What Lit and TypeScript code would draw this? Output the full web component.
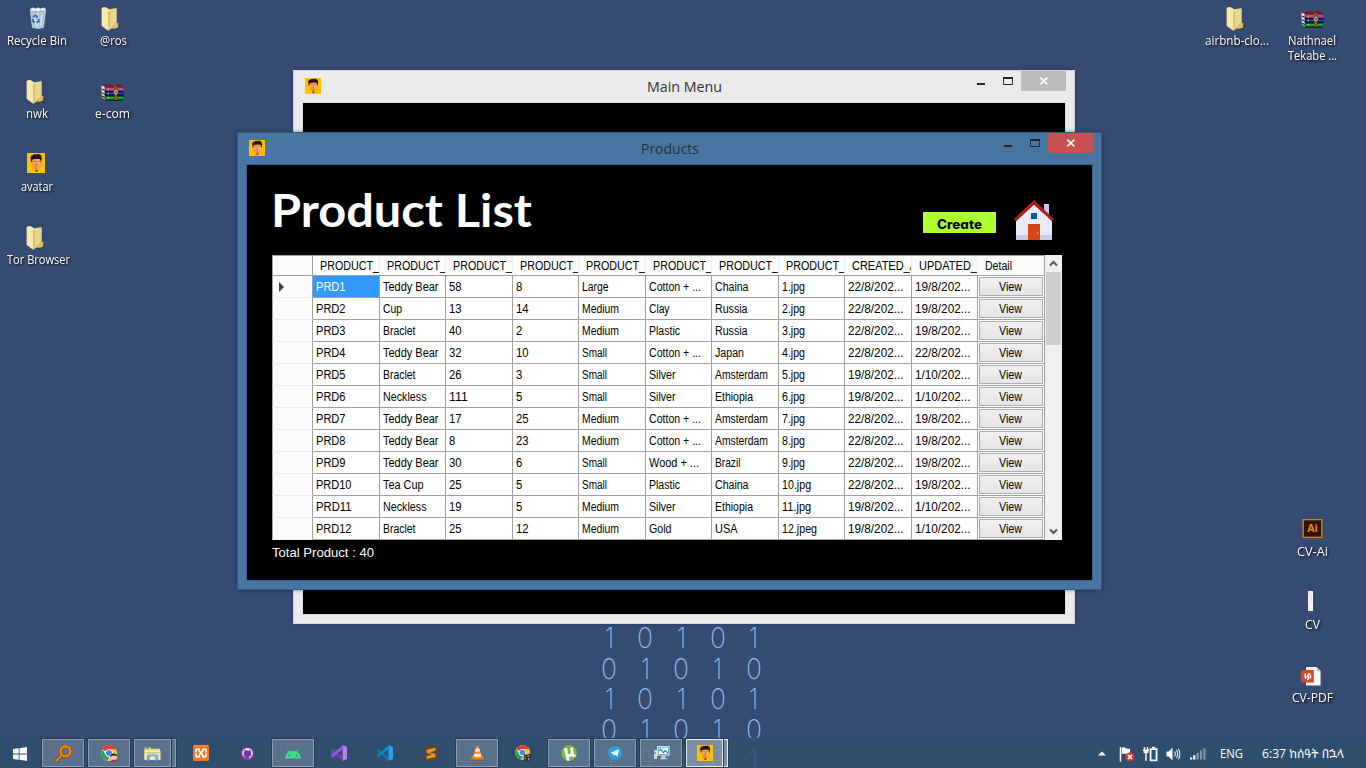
import { LitElement, html, svg, css } from "lit";
import { customElement, property } from "lit/decorators.js";

/* One line of text set to an exact measure. */
const fit = (text: string, width: number, height: number, base: number, cls = "") => html`
  <svg class="fit ${cls}" width=${width} height=${height}>
    <text x="0" y=${base} textLength=${width} lengthAdjust="spacingAndGlyphs">${text}</text>
  </svg>`;

const avatar = svg`
  <rect width="16" height="16" fill="#ffc000"/>
  <path d="M4.6 5 4.4 9 5.4 12.2 7.3 14.6H9.4L11.4 12.4 12.4 8.8 12.2 5 8.5 3.4z" fill="#ee9a45"/>
  <path d="M8.6 4.5 12.2 5 12.4 8.8 11.4 12.4 9.4 14.6 8.6 14.6z" fill="#f3a95c"/>
  <path d="M3.7 8.2 3.3 4.3 2.6 3.7 3.8 3.1 3.7 1.8 5.2 1.7 6.4.7 8.4 1.1 10.5.6 11.6 1.6 12.9 2 12.7 3.4 13.4 4.3 12.8 5.5 12.6 8.4 12 6.2 11.4 4.8 8.4 4.5 5.3 4.9 4.4 6.2z" fill="#26100f"/>
  <path d="M5.4 6.9H7.6M9.4 6.9H11.5" stroke="#8d4a22" stroke-width=".6"/>
  <path d="M5.8 7.9H7.3M9.8 7.9H11.2" stroke="#fff3d6" stroke-width=".7"/>
  <path d="M8.3 8V10.1H9.1" stroke="#b8662b" stroke-width=".6" fill="none"/>
  <path d="M7.1 12.2H9.8L9.1 11.7H7.8z" fill="#7d3a20"/>
  <path d="M7.3 13.6H9.5L9 15H7.9z" fill="#5b2419"/>`;

const chrome = svg`
  <circle cx="7.5" cy="7.5" r="7.3" fill="#fff"/>
  <path d="M7.5 7.5 1.2 3.8A7.4 7.4 0 0 1 14 4z" fill="#e33b2e"/>
  <path d="M7.5 .2A7.3 7.3 0 0 1 13.9 4H7.5A3.5 3.5 0 0 0 4.4 5.9L1.2 3.8A7.3 7.3 0 0 1 7.5.2z" fill="#e33b2e"/>
  <path d="M1.2 3.8 4.5 9.3A3.5 3.5 0 0 0 8 11L6.3 14.7A7.3 7.3 0 0 1 1.2 3.8z" fill="#2ba24c"/>
  <path d="M7.5 4H13.9A7.3 7.3 0 0 1 6.4 14.7L10.5 9.3A3.5 3.5 0 0 0 9.6 4.7z" fill="#fbc116"/>
  <circle cx="7.5" cy="7.5" r="3.5" fill="#fff"/><circle cx="7.5" cy="7.5" r="2.8" fill="#4285f4"/>`;

const icons: Record<string, unknown> = {
  avatar: svg`<svg viewBox="0 0 16 16" preserveAspectRatio="none">${avatar}</svg>`,
  bin: svg`<svg viewBox="0 0 18 23">
    <path d="M1 2 3.2 21.3Q9 23.6 14.7 21.3L17 2z" fill="#a9bdcd" stroke="#dbe7ef" stroke-width=".8"/>
    <path d="M5 7 7 20M9 6V21M13 7 12 20" stroke="#dfe9ef" stroke-width="1.4" fill="none"/>
    <path d="M1 2 4 .6 6.6 1.8 9 .4 12 1.8 14.7.5 17 2 15.7 4.4 12 3.6 9.5 5 6 4 2.5 4.6z" fill="#eef3f6" stroke="#8295a8" stroke-width=".5"/>
    <path d="M4 11 5.4 8.8 7.6 9.4 8.2 11.5M9.3 12.3 10 15 7.6 16.4M5.8 16.2 3.6 15 3.8 12.6" fill="none" stroke="#2868c8" stroke-width="1.8"/>
  </svg>`,
  folder: svg`<svg viewBox="0 0 20 24">
    <path d="M10 18 20 18 16.6 23 8 22z" fill="#1f2d48" opacity=".45"/>
    <path d="M8.4 2.3 15.4 1.5V15.4L17.2 16V20.6L14.2 21.7 8 21.6z" fill="#d9bd63"/>
    <path d="M9.8 2 15.6 1.3V15L9.8 20.7z" fill="#ead68c"/>
    <path d="M1 1 4.2.3 9.6 3.6V21.8L7.2 23.3 1 18.8z" fill="#fae9a6" stroke="#fdf6ce" stroke-width=".7"/>
    <path d="M6.9 4.5 9.6 3.7V21.8L7.2 23.2z" fill="#d8c077"/>
  </svg>`,
  rar: svg`<svg viewBox="0 0 24 19" preserveAspectRatio="none">
    <path d="M1 3 6 1H20L23.5 4.5V6H2z" fill="#6b1d35"/>
    <path d="M.4 3 4 4V18L1 15z" fill="#e9e4dc"/>
    <path d="M1.3 6.3 4 8M1.3 10.3 4 12M1.3 13.8 4 15.8" stroke="#222" stroke-width="1.2"/>
    <rect x="4" y="4.5" width="19.5" height="4.3" fill="#8a2f60"/><path d="M5 6.3H23" stroke="#d85fb0" stroke-width="1.3"/>
    <rect x="4" y="9" width="19.5" height="4.4" fill="#0b1266"/><path d="M5 11H23" stroke="#2a50e0" stroke-width="1.3"/>
    <rect x="4" y="13.6" width="19.5" height="4.5" fill="#0c6a1c"/><path d="M5 15.5H23" stroke="#20c838" stroke-width="1.3"/>
    <path d="M4 9H23.5M4 13.5H23.5M4 18.3H23" stroke="#160c23" stroke-width=".9"/>
    <path d="M11.5 1 13.8 4V18H17V4L14.5 1z" fill="#6e4513"/><path d="M15.4 4V18" stroke="#d6a44b" stroke-dasharray="1 1"/>
    <circle cx="15.4" cy="9.7" r="1.8" fill="none" stroke="#d8d0ba" stroke-width=".9"/>
    <path d="M7.5 6V7.8M7.5 10V12M7.5 14.8V16.6" stroke="#e0b84c" stroke-width="1.2"/>
  </svg>`,
  ai: svg`<svg viewBox="0 0 21 20"><rect x=".7" y=".7" width="19.6" height="18.6" fill="#2b1703" stroke="#e07c12" stroke-width="1.4"/><text x="4.9" y="13.8" class="aiText" textLength="11" lengthAdjust="spacingAndGlyphs">Ai</text></svg>`,
  strip: svg`<svg viewBox="0 0 5 20"><rect width="5" height="20" fill="#f5f4f3"/><path d="M2 1V7M3.4 4V12M1.8 10V18" stroke="#dedad8" stroke-width=".7"/></svg>`,
  pdf: svg`<svg viewBox="0 0 20 19">
    <path d="M5 0H15.5L19.6 4V18.6H5z" fill="#f7f7f7"/><path d="M15.5 0V4.2H19.6z" fill="#c9ccd0"/>
    <rect y="3" width="12.8" height="12.6" fill="#d2492c"/>
    <path d="M4.2 6.4V11M4 11.2 6 10.2M6.4 13Q8.6 10.8 6.6 8.6L8.6 6.2M9.4 7.4V11.4" stroke="#fff" stroke-width="1.5" fill="none"/>
  </svg>`,
  win: svg`<svg viewBox="0 0 14 14"><path d="M0 2.1 5.7 1.3V6.6H0zM6.5 1.2 14 .1V6.6H6.5zM0 7.4H5.7V12.7L0 11.9zM6.5 7.4H14V13.9L6.5 12.8z" fill="#fff"/></svg>`,
  search: svg`<svg viewBox="0 0 16 16"><path d="M6.6 9.4 1.5 14.6" stroke="#6f3a12" stroke-width="3.6" stroke-linecap="round"/><circle cx="9.9" cy="5.9" r="4.6" fill="none" stroke="#8a4208" stroke-width="3"/><circle cx="9.9" cy="5.9" r="4.6" fill="none" stroke="#ff8c0a" stroke-width="2"/><path d="M6.6 9.4 1.5 14.6" stroke="#f07d0a" stroke-width="2.2" stroke-linecap="round"/></svg>`,
  chromeA: svg`<svg viewBox="0 0 16 16">${chrome}<circle cx="11.7" cy="11" r="3.5" fill="#e6c8ae"/><path d="M8.6 9.9Q11 6.7 14.8 9.1L15 10.5Q11 9 9 11.2z" fill="#3a2018"/><path d="M8.3 16 10.6 13.8 13.5 13.8 16 15.7z" fill="#bb3038"/></svg>`,
  chromeB: svg`<svg viewBox="0 0 16 16">${chrome}<path d="M8.6 10.2 10 9.2 12 9.8 14.6 9 15.6 10.8 15.2 15.6H9z" fill="#27211f"/><path d="M9.8 11.6 10.8 11M12.4 11.4 14.2 10.9M9.8 14 11 13M13 14.8 14.6 13" stroke="#c9a78c" stroke-width="1.1"/></svg>`,
  explorer: svg`<svg viewBox="0 0 17 15">
    <path d="M.5 1.5H6L7.4 2.8H16V13.6H.5z" fill="#efd98a"/><path d="M1.5 1.6H5V3H1.5z" fill="#3fa83d"/>
    <path d="M.5 4.5H16.5V13.8H.5z" fill="#f8e9ae"/><path d="M.5 6.6H16.5" stroke="#e0c56d"/>
    <path d="M2.6 14.6 3.2 8.3Q8.5 6.1 14 8.3L14.6 14.6H11.4V11Q8.5 9.6 5.8 11V14.6z" fill="#62b4e4"/><path d="M4 8.8Q8.5 7.2 13.3 8.8" stroke="#b5e0f6" fill="none"/>
  </svg>`,
  xampp: svg`<svg viewBox="0 0 16 16"><rect width="16" height="16" rx="1.6" fill="#f57421"/><path d="M1 .8H15" stroke="#ff9c55"/>
    <path d="M3 7.4V5.6Q3 4 4.7 4Q6.4 4 6.4 5.6V6.4L9.6 9.6V10.4Q9.6 12 11.3 12Q13 12 13 10.4V8.6M13 7.4V5.6Q13 4 11.3 4Q9.6 4 9.6 5.6V6.4L6.4 9.6V10.4Q6.4 12 4.7 12Q3 12 3 10.4V8.6" fill="none" stroke="#fff" stroke-width="1.7"/></svg>`,
  github: svg`<svg viewBox="0 0 16 16"><circle cx="8" cy="8" r="7.6" fill="#7a3ba5"/><circle cx="8" cy="7.7" r="5.6" fill="#f5effa"/>
    <path d="M6.5 13.6V11.6Q3.9 11 3.9 7.9Q3.9 6.9 4.6 6L4.6 4.1 6.5 4.9Q8 4.5 9.5 4.9L11.4 4.1V6Q12.1 6.9 12.1 7.9Q12.1 11 9.5 11.6V13.6z" fill="#7135a0"/><path d="M3.5 10.2 5 12.2 6.6 12.3" stroke="#7135a0" fill="none"/></svg>`,
  android: svg`<svg viewBox="0 0 16 10"><path d="M0 10A8 7.7 0 0 1 16 10z" fill="#3ddc84"/><path d="M4.3 4 2.6.8M11.7 4 13.4.8" stroke="#3ddc84" stroke-width=".9"/><circle cx="4.4" cy="7" r=".7" fill="#315a66"/><circle cx="11.6" cy="7" r=".7" fill="#315a66"/></svg>`,
  vs: svg`<svg viewBox="0 0 16 16"><path d="M11.6 0 16 2V14L11.6 16z" fill="#b580ef"/><path d="M0 4.2 1.7 3.4 11.6 12V16L2 7.5 1.7 10.5 0 11.8z" fill="#7a3cc2"/><path d="M0 11.8 1.7 12.6 11.6 4V0L1.5 9z" fill="#9557dc"/></svg>`,
  vscode: svg`<svg viewBox="0 0 16 16"><path d="M11.5 0 16 2V14L11.5 16z" fill="#27a2ec"/><path d="M0 5.4 1.5 4.2 11.6 12V16z" fill="#0f76b9"/><path d="M0 10.6 1.5 11.8 11.6 4.2V0z" fill="#1287cb"/></svg>`,
  sublime: svg`<svg viewBox="0 0 16 16"><rect width="16" height="16" rx="1" fill="#4b4a49"/><path d="M12.4 2.8V5.5L6.8 7.2 12.4 8.9V12L3.6 14V11.3L9.2 9.6 3.6 7.7V4.8z" fill="#ff9800"/></svg>`,
  vlc: svg`<svg viewBox="0 0 16 16"><path d="M2.6 11H13.4L15.6 15.5H.4z" fill="#f07d10"/><path d="M7 .3H9L12.6 12.2Q8 14.3 3.4 12.2z" fill="#ff8b17"/><path d="M6.2 3.2H9.8L10.8 6.4H5.2zM4.5 8.8H11.5L12.3 11.4Q8 13 3.7 11.4z" fill="#f1ecea"/><path d="M.4 15.4H15.6" stroke="#ad4b05"/></svg>`,
  ut: svg`<svg viewBox="0 0 16 16"><circle cx="8" cy="8" r="7.9" fill="#78b843"/><path d="M3 3.6 6.2 3.1 6.8 7.6Q7.2 9.7 8.7 9.2Q10.1 8.6 9.7 6.6L9.1 2.7 11.8 2.3 12.8 8.8Q13 10.3 14.4 9.8L15.3 9.9Q14.6 12 12.6 12Q11.4 12 10.8 11Q9.7 12.4 7.7 12.1L8.5 15.8H6.1Q4.5 12 3 3.6z" fill="#fff"/></svg>`,
  telegram: svg`<svg viewBox="0 0 14 14"><circle cx="7" cy="7" r="7" fill="#27a0dc"/><path d="M2.6 6.8 11 3.3 9.7 10.5 6.7 8.6 5.4 10 5.1 7.9z" fill="#fff"/><path d="M5.1 7.9 9.4 4.9 6.2 8.3" stroke="#9ccde8" stroke-width=".6" fill="none"/></svg>`,
  monitor: svg`<svg viewBox="0 0 17 16"><rect x="1" y="5" width="3" height="9" fill="#d7dbd8"/><path d="M1 8H3" stroke="#38a04b"/><rect x="4" y="1" width="12.6" height="9.6" fill="#e8ecee"/><rect x="5.2" y="2.2" width="10.2" height="7.2" fill="#f7fcff" stroke="#2489b9" stroke-width=".6"/><path d="M5.5 6.5 7.6 4.2 10.3 7.6 12.2 5.6 15 8.3" fill="none" stroke="#1a8ac0" stroke-width="1.1"/><path d="M8.5 10.7H12.3V12.5L15 14.2H6.3L8.5 12.5z" fill="#cdd2d4"/></svg>`,
  flag: svg`<svg viewBox="0 0 16 16"><path d="M1.5 1V15.8" stroke="#fff" stroke-width="1.5"/><path d="M2.8 1.8Q5.3.5 7.2 2.2Q9.3 3.4 11 2.6V8.4Q8.8 9.5 6.8 8Q4.8 7 2.8 8z" fill="#fff"/><circle cx="11" cy="11" r="4.6" fill="#dc3227"/><path d="M8.9 8.9 13.1 13.1M13.1 8.9 8.9 13.1" stroke="#fff" stroke-width="1.5"/></svg>`,
  battery: svg`<svg viewBox="0 0 15 16"><path d="M1.5 1V3.6M4.5 1V3.6M0 4.2H6M3 7V14.8" stroke="#fff" stroke-width="1.4" fill="none"/><path d="M.6 4.4H5.4V7.2H.6z" fill="#fff"/><path d="M7.6 3.2H13.6V14.4H7.6z" fill="none" stroke="#fff" stroke-width="1.8"/><path d="M9 1.6H12.2" stroke="#fff" stroke-width="1.6"/></svg>`,
  sound: svg`<svg viewBox="0 0 15 14"><path d="M.5 4.5H2.5L6.5.8V13.2L2.5 9.5H.5z" fill="#fff"/><path d="M8.6 4.6Q10 7 8.6 9.4M10.5 3Q12.8 7 10.5 11M12.4 1.8Q15.4 7 12.4 12.2" fill="none" stroke="#dfe7ed" stroke-width="1.1"/></svg>`,
  signal: svg`<svg viewBox="0 0 16 12"><path d="M1.1 9.4V11.5M4.3 7.2V11.5" stroke="#fff" stroke-width="2.2"/><path d="M7.6 4.8V11.5M11 2.6V11.5M14.4.4V11.5" stroke="#89919a" stroke-width="2.2"/></svg>`,
  home: svg`<svg viewBox="0 0 40 40"><path d="M30 4H35V17H30z" fill="#c5cae9"/><path d="M20 4.5 38 21V40H2V21z" fill="#e8eaf6"/><path d="M2 35H38V40H2z" fill="#c5cae9"/><path d="M.9 20.2 20 2.2 39.1 20.2" fill="none" stroke="#b71c1c" stroke-width="3.1"/><path d="M14 24H26V40H14z" fill="#d84315"/><path d="M23.4 31.3V34.5" stroke="#ffab91" stroke-width=".8"/><path d="M17 13H23V19H17z" fill="#01579b"/></svg>`,
};

/* name, icon box [x y w h], label centre, label top, lines [text, width] */
type Shortcut = [string, number, number, number, number, number, number, [string, number][]];
const shortcuts: Shortcut[] = [
  ["bin", 29, 7, 18, 22, 37, 34, [["Recycle Bin", 60]]],
  ["folder", 101, 7, 20, 24, 113, 34, [["@ros", 27]]],
  ["folder", 26, 80, 20, 24, 37, 107, [["nwk", 22]]],
  ["rar", 101, 83, 23, 18, 112.5, 107, [["e-com", 35]]],
  ["avatar", 27, 153, 18, 20, 37, 180, [["avatar", 32]]],
  ["folder", 26, 226, 20, 24, 38, 253, [["Tor Browser", 63]]],
  ["folder", 1226, 7, 20, 24, 1237, 34, [["airbnb-clo...", 64]]],
  ["rar", 1301, 10, 23, 18, 1312, 34, [["Nathnael", 48], ["Tekabe ...", 49]]],
  ["ai", 1302, 519, 21, 19, 1312.5, 545, [["CV-Ai", 31]]],
  ["strip", 1308, 591, 5, 20, 1312.5, 618, [["CV", 15]]],
  ["pdf", 1301, 667, 20, 19, 1312.5, 691, [["CV-PDF", 41]]],
];

const wordWidth: Record<string, number> = {
  "Teddy Bear": 55.5, Cup: 19, Braclet: 32.5, Neckless: 43.5, "Tea Cup": 40.5,
  Large: 26.5, Medium: 37, Small: 25,
  "Cotton + ...": 52, Clay: 20.5, Plastic: 31, Silver: 26.5, "Wood + ...": 50, Gold: 22.5,
  Chaina: 33.5, Russia: 32.5, Japan: 29, Amsterdam: 53, Ethiopia: 38, Brazil: 25.5, USA: 22.5,
  PRODUCT_: 59, CREATED_A: 65, UPDATED_: 58, Detail: 27, View: 23, "12.jpeg": 35,
};
const widthOf = (t: string) => {
  if (wordWidth[t]) return wordWidth[t];
  if (t.startsWith("PRD")) return 23.5 + 6 * (t.length - 3);
  if (t.endsWith(".jpg")) return 17 + 6.1 * (t.length - 5);
  if (t.endsWith("...")) return 55.5;
  return 6.3 * t.length;
};
const gridText = (t: string) => fit(t, t.endsWith(".jpg") ? widthOf(t) + 6 : widthOf(t), 14, 11);

const headers = [...Array(8).fill("PRODUCT_"), "CREATED_A", "UPDATED_", "Detail"];
const A = "22/8/202...", B = "19/8/202...", C = "1/10/202...";
const rows: string[][] = [
  ["Teddy Bear", "58", "8", "Large", "Cotton + ...", "Chaina", A, B],
  ["Cup", "13", "14", "Medium", "Clay", "Russia", A, B],
  ["Braclet", "40", "2", "Medium", "Plastic", "Russia", A, B],
  ["Teddy Bear", "32", "10", "Small", "Cotton + ...", "Japan", A, A],
  ["Braclet", "26", "3", "Small", "Silver", "Amsterdam", B, C],
  ["Neckless", "111", "5", "Small", "Silver", "Ethiopia", B, C],
  ["Teddy Bear", "17", "25", "Medium", "Cotton + ...", "Amsterdam", A, B],
  ["Teddy Bear", "8", "23", "Medium", "Cotton + ...", "Amsterdam", A, B],
  ["Teddy Bear", "30", "6", "Small", "Wood + ...", "Brazil", A, B],
  ["Tea Cup", "25", "5", "Small", "Plastic", "Chaina", A, B],
  ["Neckless", "19", "5", "Medium", "Silver", "Ethiopia", B, C],
  ["Braclet", "25", "12", "Medium", "Gold", "USA", B, C],
].map((r, i) => [`PRD${i + 1}`, ...r.slice(0, 6), `${i + 1}.${i === 11 ? "jpeg" : "jpg"}`, ...r.slice(6)]);

const fitStyles = css`
  .fit { display: block; overflow: visible; flex: none; }
  .fit text { fill: currentColor; }
`;

@customElement("product-grid")
class ProductGrid extends LitElement {
  static styles = [fitStyles, css`
    :host { display: flex; width: 790px; height: 285px; background: #fff; color: #000;
      font: 12px "Liberation Sans", sans-serif; }
    .table { width: 773px; }
    .row { display: grid; grid-template-columns: 41px 67px 66px 67px 66px 67px 66px 67px 66px 67px 66px 67px; height: 22px; }
    .row.head { height: 21px; border-top: 1px solid #a0a0a0; border-bottom: 1px solid #a0a0a0; box-sizing: border-box; background: #fcfcfc; }
    .cell { box-sizing: border-box; border-right: 1px solid #a0a0a0; border-bottom: 1px solid #a0a0a0;
      display: flex; align-items: flex-start; padding: 4px 0 0 2.5px; overflow: hidden; white-space: nowrap; }
    .cell.mark { background: #fcfcfc; border-left: 1px solid #a0a0a0; border-bottom-color: #e5edf7; padding: 6px 0 0 5px; }
    .cell.picked { background: #3399ff; color: #fff; }
    .cell.title { border-bottom: 0; border-right-color: #e5edf7; padding: 3px 0 0 6.5px; }
    .cell.title.last { border-right-color: #a0a0a0; }
    .cell.corner { border-bottom: 0; border-left: 1px solid #a0a0a0; border-right-color: #a0a0a0; }
    .cell.action { padding: 1px; }
    .view { box-sizing: border-box; width: 64px; height: 19px; border: 1px solid #adadad; background: linear-gradient(#f1f1f1, #e4e4e4);
      display: flex; padding: 2px 0 0 19px; }
    .scroll { width: 17px; background: #f0f0f0; display: flex; flex-direction: column; box-sizing: border-box; padding: 0 1px; }
    .arrow { height: 17px; display: flex; justify-content: center; align-items: center; }
    .thumb { height: 73px; background: #cdcdcd; margin-bottom: auto; }
  `];
  render() {
    return html`
      <div class="table">
        <div class="row head">
          <div class="cell corner"></div>
          ${headers.map((h, i) => html`<div class="cell title ${i === 10 ? "last" : ""}">${gridText(h)}</div>`)}
        </div>
        ${rows.map((r, i) => html`
          <div class="row">
            <div class="cell mark">${i ? "" : html`<svg width="7" height="10"><path d="M1 0V10L6 5z" fill="#404040"/></svg>`}</div>
            ${r.map((t, c) => html`<div class="cell ${!i && !c ? "picked" : ""}">${gridText(t)}</div>`)}
            <div class="cell action"><div class="view">${gridText("View")}</div></div>
          </div>`)}
      </div>
      <div class="scroll">
        <div class="arrow"><svg width="9" height="7"><path d="M1 5.5 4.5 2 8 5.5" fill="none" stroke="#555" stroke-width="2"/></svg></div>
        <div class="thumb"></div>
        <div class="arrow"><svg width="9" height="7"><path d="M1 1.5 4.5 5 8 1.5" fill="none" stroke="#555" stroke-width="2"/></svg></div>
      </div>`;
  }
}

@customElement("app-window")
class AppWindow extends LitElement {
  @property() caption = "";
  @property({ type: Number }) measure = 60;
  static styles = [fitStyles, css`
    :host { display: flex; flex-direction: column; box-sizing: border-box; background: var(--frame); border: 1px solid var(--edge);
      font: 15px "Open Sans", sans-serif; }
    .bar { height: 31px; display: grid; grid-template-columns: 1fr auto 1fr; color: var(--ink); }
    .icon { width: 16px; height: 16px; margin: 7px 0 0 11px; }
    .icon svg { display: block; width: 16px; height: 16px; }
    .caption { padding-top: 6px; }
    .buttons { display: flex; justify-content: flex-end; padding-right: 8px; }
    .btn { width: 27px; height: 20px; }
    .btn svg { display: block; }
    .close { width: 45px; background: var(--close); }
    .client { flex: 1; margin: 0 8px 8px; border: 1px solid var(--line); background: #000; }
  `];
  render() {
    return html`
      <div class="bar">
        <div class="icon">${icons.avatar}</div>
        <div class="caption">${fit(this.caption, this.measure, 20, 15)}</div>
        <div class="buttons">
          <div class="btn"><svg width="27" height="20"><path d="M10 13H18" stroke="#262626" stroke-width="2"/></svg></div>
          <div class="btn"><svg width="27" height="20"><path d="M9.5 6.5H18.5V13.5H9.5z" fill="none" stroke="#262626"/><path d="M9 7H19" stroke="#262626" stroke-width="2"/></svg></div>
          <div class="btn close"><svg width="45" height="20"><path d="M19.3 6.7 26.3 13.4M26.3 6.7 19.3 13.4" stroke="#fff" stroke-width="1.6"/></svg></div>
        </div>
      </div>
      <div class="client"><slot></slot></div>`;
  }
}

/* icon, width, height, state */
const tasks: [string, number, number, string][] = [
  ["search", 17, 17, "open"], ["chromeA", 17, 17, "open"], ["explorer", 17, 15, "open multi"], ["xampp", 16, 16, ""],
  ["github", 15, 15, ""], ["android", 16, 11, "open"], ["vs", 16, 16, ""], ["vscode", 16, 16, ""], ["sublime", 16, 16, ""],
  ["vlc", 15, 16, "open"], ["chromeB", 16, 16, ""], ["ut", 16, 16, "open"], ["telegram", 14, 14, "open"],
  ["monitor", 17, 16, "open"], ["avatar", 16, 16, "open multi active"],
];

@customElement("task-bar")
class TaskBar extends LitElement {
  static styles = [fitStyles, css`
    :host { display: flex; box-sizing: border-box; height: 30px; color: #fff; font: 12px "Open Sans", "Noto Sans Ethiopic", "Abyssinica SIL", sans-serif;
      background: rgba(46, 79, 108, .82); border-top: 1px solid #2c4a69; }
    .pic { display: flex; flex: none; }
    .pic svg { display: block; width: 100%; height: 100%; }
    .start { width: 42px; box-sizing: border-box; padding-left: 13px; display: flex; align-items: center; }
    .tasks { display: flex; gap: 4px; }
    .task { width: 42px; height: 28px; display: flex; box-sizing: border-box; }
    .face { flex: 1; display: flex; align-items: center; justify-content: center; box-sizing: border-box; border: 1px solid transparent; }
    .open .face, .more { background: rgba(150, 163, 181, .42); border: 1px solid #8c9cb1; box-shadow: 0 0 0 1px rgba(31, 50, 76, .7); }
    .more { width: 4px; box-sizing: border-box; margin-left: 1px; border-left-width: 0; }
    .active .face, .active .more { background: rgba(185, 195, 208, .55); border-color: #e6ebf1; }
    .tray { margin-left: auto; display: flex; align-items: center; padding-right: 22px; }
    .gap { flex: none; }
  `];
  render() {
    const pic = (n: string, w: number, h: number) => html`<span class="pic" style="width:${w}px;height:${h}px">${icons[n]}</span>`;
    const gap = (w: number) => html`<span class="gap" style="width:${w}px"></span>`;
    return html`
      <div class="start">${pic("win", 14, 14)}</div>
      <div class="tasks">${tasks.map(([n, w, h, s]) => html`
        <div class="task ${s}"><div class="face">${pic(n, w, h)}</div>${s.includes("multi") ? html`<div class="more"></div>` : ""}</div>`)}
      </div>
      <div class="tray">
        <svg width="8" height="5"><path d="M0 4.5 4 .5 8 4.5z" fill="#fff"/></svg>
        ${gap(13)}${pic("flag", 16, 16)}${gap(8)}${pic("battery", 15, 16)}${gap(8)}${pic("sound", 15, 14)}${gap(9)}${pic("signal", 16, 12)}
        ${gap(14)}${fit("ENG", 23, 16, 12)}${gap(19)}${fit("6:37 ከሰዓት በኋላ", 82, 16, 12)}
      </div>`;
  }
}

@customElement("app-root")
class AppRoot extends LitElement {
  static styles = [fitStyles, css`
    :host { display: flex; flex-direction: column; justify-content: flex-end; position: relative; width: 1366px; height: 768px; overflow: hidden; background: #364b71; }
    task-bar { position: relative; }
    .digits { position: absolute; left: 591px; top: 623px; display: grid; grid-template-columns: repeat(5, 36.2px); grid-auto-rows: 30.5px;
      color: #96b9ea; font: 200 28px Inter, sans-serif; }
    .digit { display: flex; justify-content: center; padding-top: 3px; }
    .pic { position: absolute; }
    .pic svg { display: block; width: 100%; height: 100%; }
    .aiText { font: bold 11.5px "Open Sans", sans-serif; fill: #f78a16; }
    .label { position: absolute; width: 80px; margin-left: -40px; display: flex; flex-direction: column; align-items: center;
      color: #fff; font: 12px "Open Sans", sans-serif; }
    .label .fit { filter: drop-shadow(1px 1px 1px #000); }
    .win { position: absolute; }
    .main { left: 293px; top: 70px; width: 782px; height: 554px; --frame: #ebebeb; --edge: #d4d4d4; --line: #dcdcdc; --ink: #333; --close: #bcbcbc; box-shadow: 0 0 3px rgba(20, 30, 60, .35); }
    .products { left: 237px; top: 132px; width: 865px; height: 458px; --frame: #4776a2; --edge: #35597f; --line: #3a628b; --ink: #252f3b; --close: #c75050; box-shadow: 0 0 4px rgba(15, 25, 50, .5); }
    .body { display: flex; flex-direction: column; padding-left: 25px; }
    .top { display: flex; height: 90px; color: #fff; }
    .heading { font: bold 46px Lato, sans-serif; padding: 14px 0 0 0; margin-left: -1px; }
    .create { width: 73px; height: 21px; background: #adff2f; color: #000; font: 800 12.5px Inter, sans-serif; font-feature-settings: "cv11", "ss03"; margin: 47px 18px 0 auto; display: flex; justify-content: center; }
    .home { width: 40px; height: 40px; margin: 35px 38px 0 0; }
    .home svg { display: block; }
    .total { color: #fff; font: 13.5px "Liberation Sans", sans-serif; padding-top: 4px; }
  `];
  render() {
    return html`
      <div class="digits">
        ${Array.from({ length: 25 }, (_, i) => html`<span class="digit">${i % 2 ? fit("0", 16, 24, 22) : fit("1", 9, 24, 22)}</span>`)}
      </div>
      ${shortcuts.map(([icon, x, y, w, h, cx, top, lines]) => html`
        <span class="pic" style="left:${x}px;top:${y}px;width:${w}px;height:${h}px">${icons[icon]}</span>
        <div class="label" style="left:${cx}px;top:${top}px">${lines.map(([t, m]) => fit(t, m, 15, 11))}</div>`)}
      <app-window class="win main" caption="Main Menu" measure="75"></app-window>
      <app-window class="win products" caption="Products" measure="58">
        <div class="body">
          <div class="top">
            <div class="heading">${fit("Product List", 261, 60, 48)}</div>
            <div class="create">${fit("Create", 45, 20, 17)}</div>
            <div class="home">${icons.home}</div>
          </div>
          <product-grid></product-grid>
          <div class="total">${fit("Total Product : 40", 102, 18, 13)}</div>
        </div>
      </app-window>
      <task-bar></task-bar>`;
  }
}
